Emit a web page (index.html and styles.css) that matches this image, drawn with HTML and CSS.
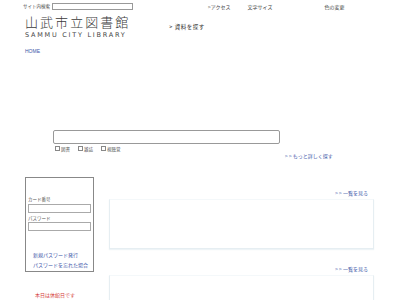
FILE: index.html
```html
<!DOCTYPE html>
<html lang="ja">
<head>
<meta charset="utf-8">
<link rel="stylesheet" href="styles.css">
</head>
<body>
<div class="page">
  <div class="topbar">
    <span class="lbl">サイト内検索</span>
    <span class="site-input"></span>
    <span class="util util-access">&gt;アクセス</span>
    <span class="util util-size">文字サイズ</span>
    <span class="util util-color">色の変更</span>
  </div>
  <div class="logo-row">
    <div class="logo">
      <div class="logo-ja">山武市立図書館</div>
      <div class="logo-en">SAMMU CITY LIBRARY</div>
    </div>
    <a class="gnav">&gt; 資料を探す</a>
  </div>
  <div class="crumb"><a>HOME</a></div>

  <div class="search">
    <div class="search-box"></div>
    <div class="checks">
      <label><span class="cb"></span>図書</label>
      <label><span class="cb"></span>雑誌</label>
      <label><span class="cb"></span>視聴覚</label>
    </div>
    <div class="more"><a>&gt; &gt; もっと詳しく探す</a></div>
  </div>

  <div class="main">
    <div class="side">
      <div class="login">
        <div class="fld-lbl first">カード番号</div>
        <div class="fld"></div>
        <div class="fld-lbl">パスワード</div>
        <div class="fld"></div>
        <a class="lnk first-lnk">新規パスワード発行</a>
        <a class="lnk">パスワードを忘れた場合</a>
      </div>
      <div class="closed">本日は休館日です</div>
    </div>
    <div class="content">
      <div class="list-link"><a>&gt; &gt; 一覧を見る</a></div>
      <div class="panel"></div>
      <div class="list-link second"><a>&gt; &gt; 一覧を見る</a></div>
      <div class="panel"></div>
    </div>
  </div>
</div>
</body>
</html>
```

FILE: styles.css
```css
html, body {
  margin: 0;
  padding: 0;
  background: #fff;
}
body {
  font-family: "Noto Sans CJK JP", "Noto Sans", sans-serif;
  color: #333;
  font-size: 5px;
  line-height: 1;
  width: 400px;
  height: 300px;
  overflow: hidden;
}
a { color: #3b55a8; text-decoration: none; }

.topbar {
  display: flex;
  align-items: center;
  padding: 3px 0 0 23px;
  height: 6px;
}
.lbl { color: #444; font-size: 4.5px; }
.site-input {
  display: block;
  margin-left: 2px;
  width: 79px;
  height: 5px;
  border: 1px solid #999;
}
.util { color: #444; font-size: 5px; }
.util-access { margin-left: 75px; }
.util-size { margin-left: 17px; }
.util-color { margin-left: 52px; }

.logo-row {
  display: flex;
  align-items: flex-start;
  padding: 4px 0 0 25px;
}
.logo-ja {
  font-size: 13px;
  line-height: 18.8px;
  letter-spacing: 2.05px;
  color: #3a3a3a;
  font-weight: 300;
}
.logo-en {
  font-family: "DejaVu Sans", sans-serif;
  font-size: 6.5px;
  line-height: 7.6px;
  letter-spacing: 1.75px;
  color: #444;
}
.gnav {
  margin: 12px 0 0 39px;
  color: #333;
  font-size: 5.5px;
  letter-spacing: 0.5px;
}
.crumb {
  padding: 9px 0 0 25px;
  font-size: 5px;
}
.crumb a { font-family: "Liberation Sans", sans-serif; }

.search {
  padding: 76px 0 0 53px;
}
.search-box {
  width: 225px;
  height: 12px;
  border: 1px solid #999;
  border-radius: 2px;
}
.checks {
  display: flex;
  padding: 2px 0 0 2px;
  font-size: 4.5px;
  color: #555;
}
.checks label { display: flex; align-items: center; margin-right: 8px; }
.cb {
  display: inline-block;
  width: 3px;
  height: 3px;
  border: 0.6px solid #888;
  margin-right: 1px;
}
.more {
  padding: 2px 0 0 232px;
  font-size: 5px;
}

.main {
  display: flex;
  padding: 19px 0 0 25px;
}
.side { width: 69px; }
.login {
  border: 1px solid #888;
  box-sizing: border-box;
  height: 95px;
  padding: 0 2px;
}
.fld-lbl { font-size: 4.5px; color: #555; margin-top: 3px; }
.fld-lbl.first { margin-top: 19px; }
.fld {
  height: 7px;
  border: 1px solid #aaa;
  margin-top: 2px;
}
.lnk { display: block; font-size: 5px; padding-left: 5px; }
.first-lnk { margin-top: 21px; }
.lnk + .lnk { margin-top: 5px; }
.closed {
  margin: 20px 0 0 10px;
  color: #d43a3a;
  font-size: 5px;
}
.content {
  margin-left: 15px;
  width: 265px;
}
.list-link {
  text-align: right;
  padding: 13px 6px 0 0;
  font-size: 5px;
}
.list-link.second { padding-top: 17px; }
.panel {
  margin-top: 4px;
  height: 48px;
  border: 1px solid #e6eef2;
  border-top-color: #f4f8fa;
  box-shadow: 0 1px 1px rgba(200,220,230,0.3);
}
```
